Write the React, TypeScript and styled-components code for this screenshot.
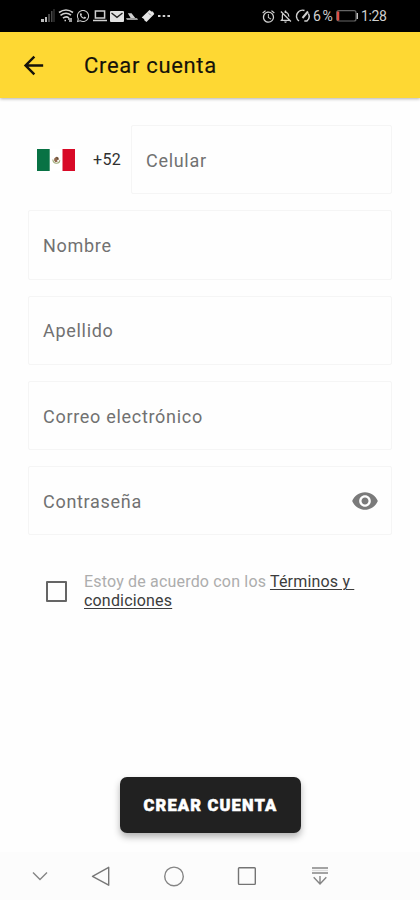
import React from 'react';
import styled, { createGlobalStyle } from 'styled-components';
import { MdAlarm, MdArrowBack, MdVisibility, MdOutlineNotificationsOff } from 'react-icons/md';
import { FaWhatsapp } from 'react-icons/fa';

const GlobalStyle = createGlobalStyle`
  * { box-sizing: border-box; }
  body { margin: 0; background: #fefefe; font-family: Roboto, sans-serif; }
  button { font-family: inherit; border: 0; padding: 0; background: none; }
`;

const Screen = styled.div`
  width: 420px;
  height: 900px;
  display: flex;
  flex-direction: column;
  background: #fefefe;
  overflow: hidden;
`;

const StatusBar = styled.header`
  height: 32px;
  flex: none;
  display: flex;
  align-items: center;
  justify-content: space-between;
  padding: 0 33px 0 40px;
  background: #000;
  color: #d0d0d0;
`;

const StatusGroup = styled.div<{ $gap: number }>`
  display: flex;
  align-items: center;
  gap: ${(p) => p.$gap}px;
  svg { display: block; flex: none; }
`;

const StatusText = styled.span<{ $size: number; $width: number; $spacing?: number }>`
  width: ${(p) => p.$width}px;
  font-size: ${(p) => p.$size}px;
  letter-spacing: ${(p) => p.$spacing ?? 0}px;
  line-height: 16px;
  white-space: nowrap;
`;

const AppBar = styled.div`
  height: 66px;
  flex: none;
  display: flex;
  align-items: center;
  padding-left: 19px;
  background: #fed833;
  box-shadow: 0 1px 3px rgba(0, 0, 0, 0.3);
  color: #15120a;
`;

const BackButton = styled.button`
  width: 29px;
  height: 29px;
  margin-right: 36px;
  color: inherit;
  svg { display: block; }
`;

const Title = styled.h1`
  margin: 0;
  font-size: 22px;
  font-weight: 400;
  letter-spacing: 0.68px;
  -webkit-text-stroke: 0.15px currentColor;
`;

const Form = styled.form`
  flex: 1;
  display: flex;
  flex-direction: column;
  padding: 27px 28px 0;
`;

const Fields = styled.div`
  display: flex;
  flex-direction: column;
  gap: 16px;
`;

const PhoneRow = styled.div`
  display: flex;
`;

const Country = styled.div`
  width: 103px;
  display: flex;
  align-items: center;
  padding-left: 9px;
  svg { display: block; margin-right: 18px; }
`;

const DialCode = styled.span`
  font-size: 16px;
  letter-spacing: 0.4px;
  color: #303030;
`;

const Field = styled.label`
  flex: 1;
  min-height: 69.3px;
  display: flex;
  align-items: center;
  justify-content: space-between;
  padding: 1px 12px 0 14px;
  border: 1px solid #f5f5f5;
  border-radius: 2px;
  color: #7a7a7a;
`;

const Label = styled.span`
  font-size: 18px;
  letter-spacing: 0.7px;
  color: #717171;
`;

const Terms = styled.div`
  display: flex;
  align-items: center;
  margin: 37px 0 0 18px;
`;

const Checkbox = styled.span`
  width: 21px;
  height: 21px;
  margin-right: 17px;
  border: 2px solid #656565;
  border-radius: 1px;
`;

const TermsText = styled.div`
  display: flex;
  flex-direction: column;
  font-size: 16px;
  line-height: 19px;
  letter-spacing: 0.18px;
  color: #adadad;
  white-space: pre;
`;

const TermsLink = styled.a`
  color: #3c3c3c;
  text-decoration: underline;
  text-decoration-thickness: 1px;
  text-underline-offset: 2px;
`;

const Submit = styled.button`
  width: 181px;
  height: 56px;
  margin: auto 0 19px 92px;
  border-radius: 7px;
  background: #212121;
  color: #fff;
  font-size: 16.5px;
  font-weight: 900;
  letter-spacing: 1.15px;
  -webkit-text-stroke: 0.5px currentColor;
  box-shadow: 0 4px 7px rgba(0, 0, 0, 0.3);
`;

const NavBar = styled.nav`
  height: 48px;
  flex: none;
  display: flex;
  align-items: center;
  padding-left: 28px;
  gap: 49px;
  background: #fcfcfc;
  svg { display: block; flex: none; }
  svg:first-child { margin-right: -12.5px; }
`;

const SignalIcon = () => (
  <svg width="15" height="14" viewBox="0 0 15 14">
    <path d="M1 13h3v-3H1zM5 13h2V8H5z" fill="#bbb" />
    <path d="M8 13h2V5H8zM11 13h1.5V2H11zM13.5 13h1V0h-1z" fill="#484848" />
  </svg>
);

const WifiIcon = () => (
  <svg width="16" height="14" viewBox="0 0 16 14" fill="none" stroke="currentColor" strokeWidth="1.6">
    <path d="M1 3.5Q8-1.5 15 3.5M2.5 6.4Q8 2.3 13 6.2M5 9.2Q8 6.5 11 9" />
    <path d="M6.5 11.5H8M10 10h4M11 12h3" />
  </svg>
);

const LaptopIcon = () => (
  <svg width="14" height="12" viewBox="0 0 14 12" fill="none" stroke="currentColor" strokeWidth="1.5">
    <path d="M2.4 1h9.2v7H2.4zM0 10.5h14" />
  </svg>
);

const MailIcon = () => (
  <svg width="14" height="11" viewBox="0 0 14 11">
    <rect width="14" height="11" rx="1" fill="#e2e2e2" />
    <path d="M1.5 2L7 6.3 12.5 2" fill="none" stroke="#222" strokeWidth="1.3" />
  </svg>
);

const BoatIcon = () => (
  <svg width="12" height="9" viewBox="0 0 13 9" fill="currentColor">
    <path d="M2 1h4l4 5H5zM0 6.5h12L13 8H1z" />
  </svg>
);

const TicketIcon = () => (
  <svg width="14" height="14" viewBox="0 0 14 14">
    <path d="M0.7 8.5L8.5 1l2 1.5 1.4.1L13.3 5 5.5 13l-2-1.4L3 10z" fill="#e5e5e5" />
    <path d="M7.3 3.8l3 3" stroke="#555" strokeWidth="1" strokeDasharray="1 1" />
  </svg>
);

const MoreIcon = () => (
  <svg width="12" height="4" viewBox="0 0 12 4" fill="currentColor">
    <path d="M0 1h2.5v2H0zM4.7 1h2.5v2H4.7zM9.4 1H12v2H9.4z" />
  </svg>
);

const GaugeIcon = () => (
  <svg width="16" height="14" viewBox="0 0 16 14" fill="none" stroke="currentColor" strokeWidth="1.5">
    <path d="M4 12A6 6 0 0 1 9.5 1.5M13.3 4.5A6 6 0 0 1 12 12M9.3 12h3" />
    <path d="M7.5 9L13 2.5" strokeWidth="2" />
  </svg>
);

const BatteryIcon = () => (
  <svg width="23" height="12" viewBox="0 0 23 12">
    <rect x="0.7" y="0.7" width="19.3" height="10.3" rx="2" fill="none" stroke="#666" strokeWidth="1.2" />
    <path d="M1 1.5h2.3v9H1z" fill="#df4f45" />
    <path d="M21.3 3v6" stroke="#c4c4c4" strokeWidth="1.4" />
  </svg>
);

const MexicoFlag = () => (
  <svg width="38" height="22" viewBox="0 0 38 22">
    <rect width="38" height="22" fill="#fff" />
    <rect width="12.7" height="22" fill="#087244" />
    <rect x="25.5" width="12.5" height="22" fill="#d80a27" />
    <path d="M15.8 10.5q.5 4 3.8 3.8 3 0 3.2-3" fill="none" stroke="#9eaa76" strokeWidth="1.1" />
    <path d="M17.2 9.5q2-2.5 4-1.3l1 2.2-2 .5.3 1.8-2.2.5-1.2-1.7z" fill="#91694e" />
    <path d="M19 7.8l2 1.2-.4 2z" fill="#584c38" />
  </svg>
);

const HideIcon = () => (
  <svg width="24" height="24" viewBox="0 0 24 24" fill="none" stroke="#858585" strokeWidth="1.4">
    <path d="M5 8.5l7 7 7-7" />
  </svg>
);

const BackIcon = () => (
  <svg width="24" height="24" viewBox="0 0 24 24" fill="none" stroke="#777" strokeWidth="1.4">
    <path d="M19.7 3.3v17.9L3.5 12.3z" strokeLinejoin="round" />
  </svg>
);

const HomeIcon = () => (
  <svg width="24" height="24" viewBox="0 0 24 24" fill="none" stroke="#858585" strokeWidth="1.4">
    <circle cx="12" cy="12.4" r="9.3" />
  </svg>
);

const RecentsIcon = () => (
  <svg width="24" height="24" viewBox="0 0 24 24" fill="none" stroke="#747474" strokeWidth="1.4">
    <rect x="3.5" y="3.8" width="16.8" height="16.6" rx="0.8" />
  </svg>
);

const ShadeIcon = () => (
  <svg width="24" height="24" viewBox="0 0 24 24" fill="none" stroke="#858585" strokeWidth="1.4">
    <path d="M4 4h16M4 9h16M12 12v8M5.7 13.2L12 20l6.3-6.8" />
    <path d="M4 6.5h16" stroke="#ddd" />
  </svg>
);

const fields = [
  { label: 'Nombre' },
  { label: 'Apellido' },
  { label: 'Correo electrónico' },
  { label: 'Contraseña', secret: true },
];

export default function App() {
  return (
    <>
      <GlobalStyle />
      <Screen>
        <StatusBar>
          <StatusGroup $gap={2.7}>
            <SignalIcon />
            <WifiIcon />
            <FaWhatsapp size={14} />
            <LaptopIcon />
            <MailIcon />
            <BoatIcon />
            <TicketIcon />
            <MoreIcon />
          </StatusGroup>
          <StatusGroup $gap={2}>
            <MdAlarm size={15} />
            <MdOutlineNotificationsOff size={15} />
            <GaugeIcon />
            <StatusText $size={14} $width={21} $spacing={-0.9}>6 %</StatusText>
            <BatteryIcon />
            <StatusText $size={14} $width={26} $spacing={-0.4}>1:28</StatusText>
          </StatusGroup>
        </StatusBar>
        <AppBar>
          <BackButton type="button" aria-label="Atrás"><MdArrowBack size={29} /></BackButton>
          <Title>Crear cuenta</Title>
        </AppBar>
        <Form>
          <Fields>
            <PhoneRow>
              <Country>
                <MexicoFlag />
                <DialCode>+52</DialCode>
              </Country>
              <Field><Label>Celular</Label></Field>
            </PhoneRow>
            {fields.map((f) => (
              <Field key={f.label}>
                <Label>{f.label}</Label>
                {f.secret && <MdVisibility size={28} />}
              </Field>
            ))}
          </Fields>
          <Terms>
            <Checkbox role="checkbox" aria-checked="false" />
            <TermsText>
              <div>Estoy de acuerdo con los <TermsLink>{'Términos y '}</TermsLink></div>
              <div><TermsLink>condiciones</TermsLink></div>
            </TermsText>
          </Terms>
          <Submit type="button">CREAR CUENTA</Submit>
        </Form>
        <NavBar>
          <HideIcon />
          <BackIcon />
          <HomeIcon />
          <RecentsIcon />
          <ShadeIcon />
        </NavBar>
      </Screen>
    </>
  );
}
